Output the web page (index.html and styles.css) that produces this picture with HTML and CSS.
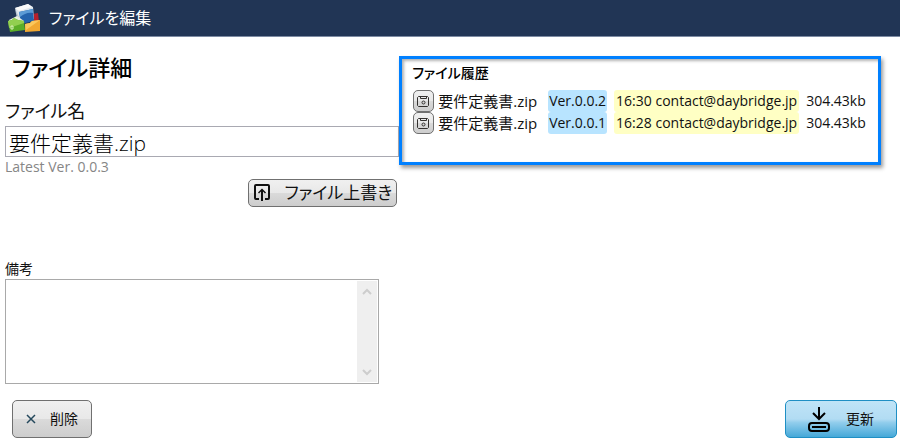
FILE: index.html
```html
<!DOCTYPE html>
<html lang="ja">
<head>
  <meta charset="UTF-8">
  <title>ファイルを編集</title>
  <meta name="viewport" content="width=device-width, initial-scale=1.0">
  <link rel="stylesheet" href="styles.css">
</head>
<body>

  <header class="titlebar">
    <svg class="logo" width="34" height="30" viewBox="0 0 34 30" aria-hidden="true">
      <path d="M25 11l6-1 1 9-7 2z" fill="#b5202c"/>
      <path d="M8 6l3 14 3 2-2-14z" fill="#b9c6d2"/>
      <path d="M8 5l13-4 5 3 1 12-13 3z" fill="#dfe6ec"/>
      <path d="M8 5l13-4 4 3-13 4z" fill="#fafafa"/>
      <path d="M12 9l14-3 1 12-13 3z" fill="#2463ad"/>
      <path d="M12 9l14-3v4c-5-1-9 1-13 4z" fill="#5c9bd6"/>
      <path d="M2 17l8-4 7 5-1 3-13 2z" fill="#e9efe2"/>
      <path d="M1 18l4-1 2-2 4 2 6 1 1 9-15 2z" fill="#5cae28"/>
      <path d="M1 18l4-1 2-2 4 2 6 1v2L2 25z" fill="#92cf50"/>
      <path d="M4 23h2v3H4z" fill="none" stroke="#d8f0b8"/>
      <path d="M18 21l5-1 2-2 8-1v11l-15 1z" fill="#f1a832"/>
      <path d="M18 21l5-1 2-2 8-1-14 10z" fill="#fac75c"/>
    </svg>
    <span>ファイルを編集</span>
  </header>

  <main class="content">
    <form class="details" id="fileForm">
      <h1>ファイル詳細</h1>
      <label class="name-label" for="fileName">ファイル名</label>
      <input class="name-input" id="fileName" type="text" value="要件定義書.zip">
      <p class="latest">Latest Ver. 0.0.3</p>
      <button class="btn overwrite" type="button">
        <svg width="18" height="18" viewBox="0 0 18 18" fill="none" stroke="#111" stroke-width="2" aria-hidden="true">
          <path d="M6 15H3a1 1 0 0 1-1-1V2a1 1 0 0 1 1-1h12a1 1 0 0 1 1 1v12a1 1 0 0 1-1 1h-3"/>
          <path d="M9 17V6"/>
          <path d="M5.500 9L9 5.500 12.500 9" stroke-width="1.500"/>
        </svg>
        ファイル上書き
      </button>
      <label class="notes-label" for="notes">備考</label>
      <div class="notes">
        <textarea id="notes"></textarea>
        <div class="scrollbar" aria-hidden="true">
          <svg width="20" height="20" viewBox="0 0 20 20" fill="none" stroke="#cdcdcd" stroke-width="2"><path d="M6 13l4-4 4 4"/></svg>
          <svg width="20" height="20" viewBox="0 0 20 20" fill="none" stroke="#cdcdcd" stroke-width="2"><path d="M6 8l4 4 4-4"/></svg>
        </div>
      </div>
    </form>

    <section class="history">
      <h2>ファイル履歴</h2>
      <table>
        <tr>
          <td>
            <button class="btn save" type="button" aria-label="保存">
              <svg width="13" height="13" viewBox="0 0 13 13" fill="none" stroke="#33302e" aria-hidden="true">
                <path d="M1.500 1.500h9l1 1v8l-1 1h-9l-1-1v-8z"/>
                <path d="M3.500 1.500v2h6v-2"/>
                <circle cx="6.500" cy="7.500" r="1.500"/>
              </svg>
            </button>
          </td>
          <td class="file">要件定義書.zip</td>
          <td><span class="tag version">Ver.0.0.2</span></td>
          <td><span class="tag author">16:30 contact@daybridge.jp</span></td>
          <td>304.43kb</td>
        </tr>
        <tr>
          <td>
            <button class="btn save" type="button" aria-label="保存">
              <svg width="13" height="13" viewBox="0 0 13 13" fill="none" stroke="#33302e" aria-hidden="true">
                <path d="M1.500 1.500h9l1 1v8l-1 1h-9l-1-1v-8z"/>
                <path d="M3.500 1.500v2h6v-2"/>
                <circle cx="6.500" cy="7.500" r="1.500"/>
              </svg>
            </button>
          </td>
          <td class="file">要件定義書.zip</td>
          <td><span class="tag version">Ver.0.0.1</span></td>
          <td><span class="tag author">16:28 contact@daybridge.jp</span></td>
          <td>304.43kb</td>
        </tr>
      </table>
    </section>
  </main>

  <footer class="actions">
    <button class="btn delete" type="button">
      <svg width="10" height="10" viewBox="0 0 10 10" stroke="#24485c" stroke-width="1.500" aria-hidden="true"><path d="M1 1l8 8M9 1l-8 8"/></svg>
      削除
    </button>
    <button class="btn update" type="submit" form="fileForm">
      <svg width="22" height="26" viewBox="0 0 22 26" fill="none" stroke="#000" stroke-width="2" aria-hidden="true">
        <path d="M11 1v12M5 7l6 6 6-6"/>
        <rect x="1" y="17" width="20" height="8" rx="3"/>
        <path d="M4 21h14"/>
      </svg>
      更新
    </button>
  </footer>

</body>
</html>
```
FILE: styles.css
```css
* {
  box-sizing: border-box;
}

body {
  margin: 0;
  background: #fff;
  color: #111;
  font-family: "Open Sans", "Noto Sans CJK JP", sans-serif;
  font-size: 14px;
  line-height: 20px;
  font-feature-settings: "palt";
}

button,
input,
textarea {
  font: inherit;
  font-feature-settings: inherit;
  color: inherit;
}

.titlebar {
  display: flex;
  align-items: center;
  gap: 8px;
  height: 37px;
  padding: 0 7px;
  background: #213555;
  border-bottom: 1px solid #7d8ba3;
  color: #fff;
  font-size: 16px;
}

.content {
  display: grid;
  grid-template-columns: minmax(0, 9fr) minmax(0, 11fr);
  align-items: start;
  padding: 0 19px 0 5px;
}

.details {
  display: flex;
  flex-direction: column;
}

h1 {
  margin: 0;
  padding: 0 7px;
  color: #000;
  font-size: 22px;
  font-weight: 500;
  line-height: 60px;
}

.name-label {
  font-size: 18px;
  line-height: 29px;
}

.name-input {
  width: 100%;
  height: 31px;
  padding: 0 3px;
  border: 1px solid #a9a9b2;
  font-size: 21px;
  font-weight: 300;
  color: #000;
}

.latest {
  margin: 0;
  color: #868686;
}

.btn {
  display: flex;
  align-items: center;
  justify-content: center;
  border: 1px solid #707070;
  border-radius: 5px;
  background: linear-gradient(#f0f0f0, #e8e8e8 50%, #dadada 51%, #cdcdcd);
}

.overwrite {
  align-self: flex-end;
  gap: 13px;
  height: 28px;
  margin: 2px 2px 0 0;
  padding: 0 4px;
  font-size: 17px;
}

.notes-label {
  margin-top: 52px;
}

.notes {
  display: flex;
  width: 95%;
  height: 105px;
  border: 1px solid #a9a9a9;
}

.notes textarea {
  flex: 1;
  min-width: 0;
  padding: 2px;
  border: 0;
  resize: none;
  overflow: hidden;
}

.scrollbar {
  display: flex;
  flex-direction: column;
  justify-content: space-between;
  margin: 1px;
  background: #efefef;
}

.history {
  min-height: 109px;
  margin-top: 19px;
  padding: 4px 10px;
  border: 3px solid #0080ff;
  box-shadow: 2px 3px 4px rgba(0, 0, 0, 0.4), inset 2px 2px 3px rgba(0, 0, 0, 0.3);
}

h2 {
  margin: 0 0 7px;
  color: #000;
  font-size: 14px;
  font-weight: 500;
  line-height: 20px;
}

table {
  border-collapse: collapse;
}

td {
  height: 22px;
  padding: 0 7px 0 0;
  line-height: 22px;
  white-space: nowrap;
}

td:first-child {
  padding: 0 4px 0 1px;
}

.file {
  padding-right: 11px;
  font-size: 15px;
}

.save {
  width: 21px;
  height: 22px;
  padding: 0;
}

.tag {
  display: block;
  padding: 0 1px;
  border-radius: 3px;
}

.version {
  background: #b8e4ff;
}

.author {
  padding: 0 2px;
  background: #ffffc4;
}

.actions {
  display: flex;
  justify-content: space-between;
  padding: 16px 3px 4px 12px;
}

.delete,
.update {
  height: 38px;
  padding: 0 13px;
}

.delete {
  gap: 14px;
}

.update {
  gap: 16px;
  padding: 0 22px;
  border-color: #1f8fc4;
  background: linear-gradient(#c0e4f7, #b2dcf3 50%, #91cdec 60%, #45a8d8);
}
```
